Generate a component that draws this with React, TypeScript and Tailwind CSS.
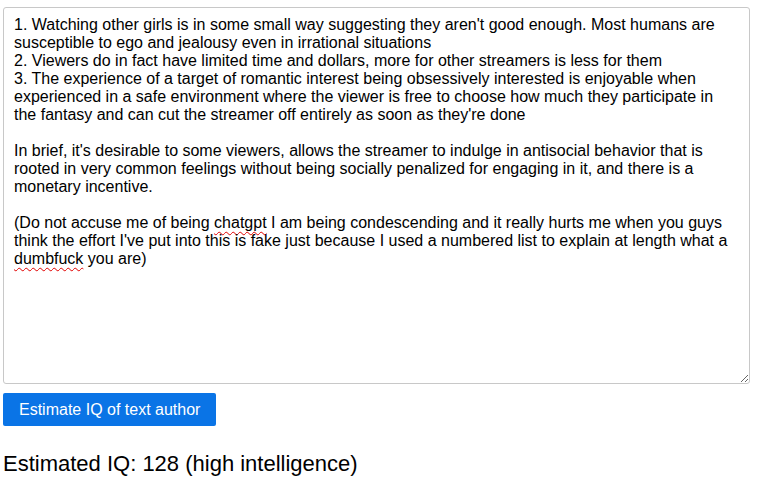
import React from 'react';

const font = { fontFamily: '"Liberation Sans", Arial, sans-serif' };

function Squiggle({ children }: { children: React.ReactNode }) {
  return (
    <span className="underline decoration-wavy decoration-[#e00000] decoration-1 underline-offset-[3px]">
      {children}
    </span>
  );
}

export default function App() {
  return (
    <div className="bg-white min-h-screen pl-[3px] pt-[7px]" style={font}>
      {/* text box */}
      <div className="w-[747px] h-[377px] border border-[#c8c8c8] rounded-[3px] pt-[8px] px-[10px] text-[16px] leading-[18px] text-black whitespace-pre-wrap overflow-auto resize">
        {`1. Watching other girls is in some small way suggesting they aren't good enough. Most humans are susceptible to ego and jealousy even in irrational situations
2. Viewers do in fact have limited time and dollars, more for other streamers is less for them
3. The experience of a target of romantic interest being obsessively interested is enjoyable when experienced in a safe environment where the viewer is free to choose how much they participate in the fantasy and can cut the streamer off entirely as soon as they're done

In brief, it's desirable to some viewers, allows the streamer to indulge in antisocial behavior that is rooted in very common feelings without being socially penalized for engaging in it, and there is a monetary incentive.

(Do not accuse me of being `}
        <Squiggle>chatgpt</Squiggle>
        {` I am being condescending and it really hurts me when you guys think the effort I've put into this is fake just because I used a numbered list to explain at length what a `}
        <Squiggle>dumbfuck</Squiggle>
        {` you are)`}
      </div>

      <button className="mt-[9px] h-[33px] px-4 bg-[#0a74e6] text-white text-[16px] rounded-[2px]">
        Estimate IQ of text author
      </button>

      <div className="mt-[25px] text-[22px] leading-[25px] text-black">
        Estimated IQ: 128 (high intelligence)
      </div>
    </div>
  );
}
